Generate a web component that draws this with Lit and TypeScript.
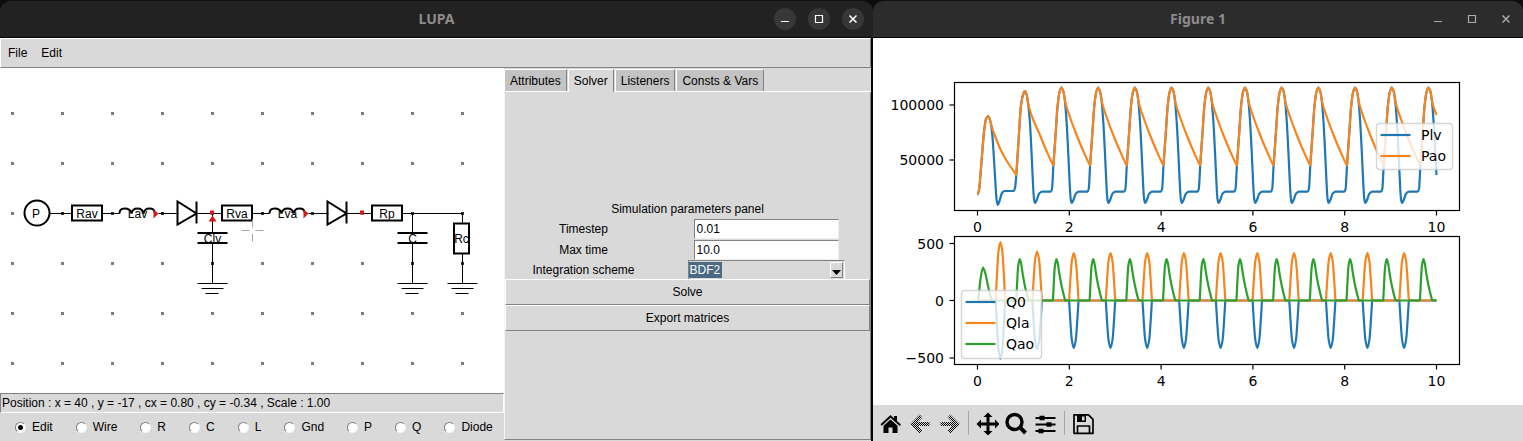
import { LitElement, html, svg, css } from "lit";
import { customElement, property, state } from "lit/decorators.js";
import { classMap } from "lit/directives/class-map.js";

type Pt = [number, number];

/* ---------- window title bar ---------- */

@customElement("title-bar")
class TitleBar extends LitElement {
  @property() heading = "";
  @property({ type: Boolean }) active = false;

  static styles = css`
    :host {
      display: block;
      background: #0c0c0c;
    }
    .bar {
      display: grid;
      grid-template-columns: 1fr auto 1fr;
      align-items: center;
      height: 38px;
      box-sizing: border-box;
      padding: 0 6px;
      border-top: 1px solid #101010;
      border-bottom: 1px solid #050505;
      border-radius: 11px 11px 0 0;
      background: #2c2c2c;
      color: #8c8c8c;
      font: bold 14px/18px "Noto Sans", "Open Sans", sans-serif;
    }
    .active {
      padding: 0 9px;
      background: #222;
    }
    .name {
      grid-column: 2;
      margin: 0;
      font: inherit;
    }
    .controls {
      display: flex;
      justify-content: flex-end;
      gap: 12px;
    }
    .control {
      display: block;
      width: 22px;
      height: 22px;
      padding: 0;
      border: 0;
      border-radius: 50%;
      background: none;
      color: #a9a9a9;
    }
    .active .control {
      background: #373737;
      color: #fff;
    }
    .glyph {
      display: block;
      fill: none;
      stroke: currentColor;
    }
  `;

  render() {
    return html`<header class=${classMap({ bar: true, active: this.active })}>
      <h1 class="name">${this.heading}</h1>
      <div class="controls">
        <button class="control" aria-label="Minimize">
          <svg class="glyph" width="22" height="22"><path d="M7 13.5h8" /></svg>
        </button>
        <button class="control" aria-label="Maximize">
          <svg class="glyph" width="22" height="22"><path d="M7.5 7.5h7v7h-7z" stroke-width="1.2" /></svg>
        </button>
        <button class="control" aria-label="Close">
          <svg class="glyph" width="22" height="22"><path d="M7.5 7.5l7 7M14.5 7.5l-7 7" stroke-width="1.5" /></svg>
        </button>
      </div>
    </header>`;
  }
}

/* ---------- circuit drawing ---------- */

const label = (x: number, y: number, text: string) =>
  svg`<text class="label" x=${x} y=${y} text-anchor="middle">${text}</text>`;

const resistor = (x: number, y: number, text: string) => svg`
  <rect class="thick" x=${x - 15} y=${y - 8} width="30" height="15"></rect>
  ${label(x, y + 4, text)}`;

const inductor = (x: number, y: number, text: string) => svg`
  <path class="thick" d="M${x - 18} ${y}q0 -5 5 -5q6 0 7 5q1 -5 6 -5t6 5q1 -5 6 -5t5 4"></path>
  <path class="flow" d="M${x + 16} ${y - 4}l5 4l-5 5z"></path>
  ${label(x, y + 4, text)}`;

const diode = (x: number, y: number) => svg`
  <path class="thick" d="M${x - 10} ${y - 12}v23l19 -11zM${x + 9} ${y - 12}v22"></path>`;

const capacitor = (x: number, y: number, text: string) => svg`
  <path class="thick" d="M${x - 15} ${y - 5.5}h30M${x - 15} ${y + 4.5}h30"></path>
  ${label(x, y + 4, text)}`;

const ground = (x: number, y: number) => svg`
  <path class="wire" d="M${x - 15} ${y}h30M${x - 11} ${y + 5}h22M${x - 7} ${y + 10}h13"></path>`;

const node = (x: number, y: number, kind: string) =>
  svg`<rect class=${kind} x=${x - 1.5} y=${y - 1.5} width="3" height="3"></rect>`;

@customElement("circuit-canvas")
class CircuitCanvas extends LitElement {
  static styles = css`
    :host {
      display: block;
      background: #fff;
      min-height: 0;
    }
    .sheet {
      display: block;
      width: 100%;
      height: 100%;
    }
    .grid { fill: #7d7d7d; }
    .joint { fill: #333; }
    .wire { fill: none; stroke: #000; stroke-width: 1; }
    .thick { fill: none; stroke: #000; stroke-width: 2; }
    .flow { fill: #d31818; }
    .cross { stroke: #a8a8a8; }
    .label { font: 12px "Liberation Sans", Arial, sans-serif; fill: #000; }
  `;

  render() {
    const dots: Pt[] = [];
    for (let r = 0; r < 6; r++) for (let c = 0; c < 10; c++) dots.push([c * 50, r * 50]);
    const joints: Pt[] = [[50, 100], [100, 100], [150, 100], [250, 100], [300, 100], [400, 100], [450, 100], [200, 150], [400, 150], [450, 150]];
    return html`<svg class="sheet" role="img" aria-label="Circuit">
      <g transform="translate(12.5 45.5)">
        ${dots.map(([x, y]) => node(x, y, "grid"))}
        ${joints.map(([x, y]) => node(x, y, "joint"))}
        <path class="wire" d="M37 100h22M90 100h17M146 100h20M184 100h25M240 100h17M296 100h20M334 100h25M390 100h60
          M200 100v19M200 130v40M400 100v19M400 130v40M450 100v9M450 140v30" />
        <circle class="thick" cx="24.5" cy="99.5" r="12.5" />
        ${label(23.5, 104, "P")}
        ${resistor(74.5, 100, "Rav")} ${inductor(125, 100, "Lav")} ${diode(175, 100)}
        ${resistor(224.5, 100, "Rva")} ${inductor(275, 100, "Lva")} ${diode(325, 100)}
        ${resistor(374.5, 100, "Rp")}
        ${capacitor(200, 125, "Clv")} ${capacitor(400, 125, "C")}
        <rect class="thick" x="441.5" y="110" width="15" height="30" />
        ${label(449, 129, "Rc")}
        ${ground(200, 170)} ${ground(400, 170)} ${ground(450, 170)}
        <path class="flow" d="M200 102l4 6h-8zM197.500 97h4v4h-4zM347.500 97h4v4h-4z" />
        <path class="cross" d="M229 117h8M243 117h8M240 106v8M240 120v8" />
      </g>
    </svg>`;
  }
}

/* ---------- editor window ---------- */

@customElement("editor-window")
class EditorWindow extends LitElement {
  @state() private tool = "Edit";
  @state() private tab = "Solver";

  static styles = css`
    :host {
      display: flex;
      flex-direction: column;
      box-sizing: border-box;
      background: #d9d9d9;
      color: #000;
      font: 12px/14px "Liberation Sans", Arial, sans-serif;
    }
    button, input, select {
      font: inherit;
      color: inherit;
      margin: 0;
      border-radius: 0;
      box-sizing: border-box;
    }
    .body {
      flex: 1;
      display: flex;
      flex-direction: column;
      min-height: 0;
      border-right: 2px solid #050505;
    }
    .menu {
      display: flex;
      gap: 12px;
      height: 30px;
      box-sizing: border-box;
      padding: 0 6px;
      border: 1px solid #fff;
      border-right-color: #828282;
      border-bottom-color: #828282;
    }
    .menu-item {
      padding: 0 1px;
      border: 0;
      background: none;
    }
    .main {
      flex: 1;
      min-height: 0;
      display: grid;
      grid-template-columns: 504fr 367fr;
    }
    .left {
      display: grid;
      grid-template-rows: 1fr auto auto;
      min-height: 0;
    }
    .status {
      padding: 2px 2px 2px 1px;
      border: 1px solid #828282;
      border-right-color: #fff;
      border-bottom-color: #fff;
    }
    .tools {
      display: flex;
      align-items: center;
      gap: 23px;
      height: 28px;
      margin: 0;
      padding: 0 0 0 15px;
      border: 0;
    }
    .tool {
      display: flex;
      align-items: center;
      gap: 6px;
    }
    .dot {
      appearance: none;
      width: 11px;
      height: 11px;
      border: 1px solid #828282;
      border-right-color: #f4f4f4;
      border-bottom-color: #f4f4f4;
      border-radius: 50%;
      background: #fff;
    }
    .dot:checked {
      background: radial-gradient(circle, #000 2px, #fff 3px);
    }
    .right {
      display: flex;
      flex-direction: column;
      padding-bottom: 1px;
    }
    .tabs {
      display: flex;
      gap: 1px;
      height: 24px;
      padding-top: 1px;
      box-sizing: border-box;
      border-bottom: 1px solid #fff;
    }
    .tab {
      padding: 0 5px;
      border: 1px solid #fff;
      border-right: 1px solid #828282;
      border-bottom: 0;
      border-radius: 2px 2px 0 0;
      background: #c3c3c3;
    }
    .chosen {
      background: #d9d9d9;
      margin-bottom: -1px;
    }
    .panel {
      flex: 1;
      display: flex;
      flex-direction: column;
      justify-content: center;
      border: 1px solid #828282;
      border-width: 0 1px 1px 0;
      border-left: 1px solid #f4f4f4;
    }
    .caption {
      margin: 0;
      font: inherit;
      line-height: 18px;
      text-align: center;
    }
    .form {
      display: grid;
      grid-template-columns: 157fr 208fr;
      grid-template-rows: 21px 21px 19px;
      place-items: center;
    }
    .field {
      width: 145px;
      height: 20px;
      padding: 0 2px;
      border: 1px solid #828282;
      border-right-color: #eee;
      border-bottom-color: #eee;
      background: #fff;
      outline: 0;
    }
    .combo {
      display: grid;
      grid-template-columns: 1fr 15px;
      width: 157px;
      height: 19px;
      box-sizing: border-box;
      border: 1px solid #828282;
      border-right-color: #fff;
      border-bottom: 0;
    }
    .choice {
      grid-area: 1 / 1 / 2 / 3;
      appearance: none;
      border: 0;
      padding: 0 0 0 1px;
      outline: 0;
      color: #fff;
      background: linear-gradient(#4a6984, #4a6984) 0 1px / 33px 16px no-repeat #d9d9d9;
    }
    .choice option {
      color: #000;
    }
    .drop {
      grid-area: 1 / 2;
      display: block;
      margin: 1px;
      border: 1px solid #fff;
      border-right-color: #828282;
      border-bottom-color: #828282;
      pointer-events: none;
      z-index: 1;
    }
    .push {
      height: 26px;
      padding: 0;
      border: 1px solid #fff;
      border-right-color: #828282;
      border-bottom-color: #828282;
      background: #d9d9d9;
    }
  `;

  render() {
    const tools = ["Edit", "Wire", "R", "C", "L", "Gnd", "P", "Q", "Diode"];
    const tabs = ["Attributes", "Solver", "Listeners", "Consts & Vars"];
    return html`
      <title-bar heading="LUPA" active></title-bar>
      <div class="body">
        <nav class="menu">
          <button class="menu-item">File</button>
          <button class="menu-item">Edit</button>
        </nav>
        <div class="main">
          <section class="left">
            <circuit-canvas></circuit-canvas>
            <div class="status">Position : x = 40 , y = -17 , cx = 0.80 , cy = -0.34 , Scale : 1.00</div>
            <fieldset class="tools" aria-label="Tool">
              ${tools.map((t) => html`<label class="tool">
                <input class="dot" type="radio" name="tool" .checked=${t === this.tool} @change=${() => (this.tool = t)} />${t}
              </label>`)}
            </fieldset>
          </section>
          <section class="right">
            <div class="tabs" role="tablist">
              ${tabs.map((t) => html`<button role="tab" aria-selected=${t === this.tab}
                class=${classMap({ tab: true, chosen: t === this.tab })}
                @click=${() => (this.tab = t)}>${t}</button>`)}
            </div>
            <div class="panel" role="tabpanel">
              <h2 class="caption">Simulation parameters panel</h2>
              <div class="form">
                <label for="step">Timestep</label>
                <input class="field" id="step" value="0.01" />
                <label for="max">Max time</label>
                <input class="field" id="max" value="10.0" />
                <label for="scheme">Integration scheme</label>
                <div class="combo">
                  <select class="choice" id="scheme"><option>BDF2</option></select>
                  <svg class="drop" viewBox="0 0 11 14"><path d="M1 7h9l-4.500 5z" /></svg>
                </div>
              </div>
              <button class="push">Solve</button>
              <button class="push">Export matrices</button>
            </div>
          </section>
        </div>
      </div>`;
  }
}

/* ---------- plots ---------- */

const PERIOD = 36.7;
const END = 563.5;

/* Monotone cubic through the samples, so that plateaus stay flat. */
function curve(pts: Pt[]): string {
  const n = pts.length;
  const slope = (i: number) => (pts[i + 1][1] - pts[i][1]) / (pts[i + 1][0] - pts[i][0]);
  const m = pts.map((_, i) => {
    if (i === 0) return 0;
    if (i === n - 1) return slope(i - 1);
    const a = slope(i - 1);
    const b = slope(i);
    return a * b <= 0 ? 0 : (2 * a * b) / (a + b);
  });
  let d = `M${pts[0][0]} ${pts[0][1]}`;
  for (let i = 0; i < n - 1; i++) {
    const [x0, y0] = pts[i];
    const [x1, y1] = pts[i + 1];
    const h = (x1 - x0) / 3;
    d += `C${(x0 + h).toFixed(2)} ${(y0 + h * m[i]).toFixed(2)} ${(x1 - h).toFixed(2)} ${(y1 - h * m[i + 1]).toFixed(2)} ${x1.toFixed(2)} ${y1.toFixed(2)}`;
  }
  return d;
}

/* A lead-in followed by periodic cycles, closed at the end of the simulated time. */
function repeat(start: Pt[], first: number, shape: (k: number) => Pt[], last: number): Pt[] {
  const out = [...start];
  for (let k = 0; k < 12; k++) for (const [x, y] of shape(k)) out.push([first + k * PERIOD + x, y]);
  return [...out.filter(([x]) => x < END - 0.5), [END, last]];
}

const rise = (k: number): Pt[] => {
  const top = k === 0 ? 53 : 49.5;
  return [[-5.5, 92], [-4, 70], [-2, top + 5], [0, top], [2, top + 4], [3.5, top + 13]];
};

const plv = repeat(
  [[104.5, 156.5], [106, 152], [108, 130], [111, 94], [113, 81], [115, 78], [117, 82], [118.5, 89], [120, 106], [122, 138],
    [123.5, 161], [124.7, 167], [126.5, 163], [129, 155], [131.5, 153], [140.5, 153], [142, 150], [143.5, 134]],
  151.7,
  (k) => [...rise(k), [5.2, 84], [7, 118], [8.3, 146], [9.3, 161], [10.3, 165], [12, 162], [14.5, 155.5], [17.5, 153.7],
    [26, 153.7], [27.3, 151], [28.7, 127.5]],
  137,
);

const pao = repeat(
  [[104.5, 156.5], [106, 152], [108, 130], [111, 94], [113, 81], [115, 78], [117, 82], [118.5, 88], [122, 98], [128, 112.5], [135, 125], [143, 136.6], [143.2, 137], [143.4, 135]],
  151.7,
  (k) => [...rise(k), [5, k ? 68.5 : 71.5], [9, k ? 80.5 : 83], [15, 96.5], [21, 111], [28.5, 127.2], [28.7, 127.5], [28.9, 125]],
  77,
);

const pulse = (h: number): Pt[] => [[-4.7, 262.5], [-4.5, 262.5 - h * 0.08], [-3.5, 262.5 - h * 0.42], [-2, 262.5 - h * 0.83], [0, 262.5 - h],
  [2, 262.5 - h * 0.83], [3.5, 262.5 - h * 0.42], [4.5, 262.5 - h * 0.08], [4.7, 262.5]];
const height = (k: number) => (k === 0 ? 58.5 : k === 1 ? 49 : 47.5);
const qla = repeat([[104.5, 262.5]], 127.4, (k) => pulse(height(k)), 262.5);
const q0 = repeat([[104.5, 262.5]], 127.4, (k) => pulse(-height(k)), 262.5);

const qao = repeat([[104.5, 262.5], [105.2, 261], [107.5, 241], [110, 229.5], [112.5, 236], [115, 248], [118.5, 261.5], [119, 262.5]], 146.7,
  () => [[-3.5, 262.5], [-3.3, 259], [-1.5, 228], [0, 221], [1.3, 225], [3, 236], [5, 247], [8.5, 261.5], [8.8, 262.5]], 262.5);

@customElement("figure-plots")
class FigurePlots extends LitElement {
  static styles = css`
    :host {
      display: block;
      min-height: 0;
      background: #fff;
    }
    .plots {
      display: block;
      width: 100%;
      height: 100%;
      font: 14px "DejaVu Sans", Verdana, sans-serif;
    }
    .frame { fill: none; stroke: #000; stroke-width: 1.2; }
    .line { fill: none; stroke-width: 2.2; stroke-linejoin: round; }
    .blue { stroke: #1f77b4; }
    .orange { stroke: #f5851f; }
    .green { stroke: #2ca02c; }
    .box { fill: #fff; fill-opacity: 0.8; stroke: #ccc; stroke-opacity: 0.8; stroke-width: 1.4; }
  `;

  private axes(top: number, ticks: [number, string][]) {
    const bottom = top + 128;
    return svg`
      <rect class="frame" x="81.5" y=${top} width="505" height="128"></rect>
      ${[0, 2, 4, 6, 8, 10].map((v) => svg`
        <path class="frame" d="M${104.5 + v * 45.9} ${bottom}v5"></path>
        <text x=${104.5 + v * 45.9} y=${bottom + 21} text-anchor="middle">${v}</text>`)}
      ${ticks.map(([y, t]) => svg`
        <path class="frame" d="M81.5 ${y}h-5"></path>
        <text x="71" y=${y + 5} text-anchor="end">${t}</text>`)}`;
  }

  private legend(x: number, y: number, w: number, rows: [string, string][]) {
    return svg`
      <rect class="box" x=${x} y=${y} width=${w} height=${rows.length * 22 + 2} rx="3"></rect>
      ${rows.map(([color, name], i) => svg`
        <path class="line ${color}" d="M${x + 4} ${y + 11.5 + i * 21}h30"></path>
        <text x=${x + 44.5} y=${y + 16.5 + i * 21}>${name}</text>`)}`;
  }

  render() {
    return html`<svg class="plots" viewBox="0 0 650 367" role="img" aria-label="Pressure and flow plots">
      <path class="line blue" d=${curve(plv)} />
      <path class="line orange" d=${curve(pao)} />
      <path class="line blue" d=${curve(q0)} />
      <path class="line orange" d=${curve(qla)} />
      <path class="line green" d=${curve(qao)} />
      ${this.axes(44.5, [[67, "100000"], [122, "50000"]])}
      ${this.axes(198.5, [[205.5, "500"], [262.5, "0"], [320, "−500"]])}
      ${this.legend(503.5, 85.5, 76, [["blue", "Plv"], ["orange", "Pao"]])}
      ${this.legend(88.5, 252.5, 80, [["blue", "Q0"], ["orange", "Qla"], ["green", "Qao"]])}
    </svg>`;
  }
}

@customElement("figure-window")
class FigureWindow extends LitElement {
  static styles = css`
    :host {
      display: grid;
      grid-template-rows: auto 1fr auto;
      min-height: 0;
    }
    .toolbar {
      display: flex;
      align-items: center;
      height: 36px;
      padding-left: 4px;
      background: #d9d9d9;
    }
    .action {
      display: grid;
      place-items: center;
      width: 29px;
      height: 29px;
      padding: 0;
      border: 0;
      background: none;
    }
    .divider {
      width: 1px;
      height: 24px;
      margin: 0 4px;
      background: #a6a6a6;
    }
    .icon {
      display: block;
      fill: #000;
      stroke: none;
    }
    .stroke {
      fill: none;
      stroke: #000;
    }
    .faded {
      fill: none;
      stroke: url(#stipple);
      stroke-width: 4;
    }
  `;

  render() {
    const icon = (name: string, body: unknown) =>
      html`<button class="action" aria-label=${name}><svg class="icon" width="23" height="23" viewBox="0 0 23 23">${body}</svg></button>`;
    const stipple = svg`<defs><pattern id="stipple" width="2" height="2" patternUnits="userSpaceOnUse">
      <path fill="#000" d="M0 0h1v1h-1zM1 1h1v1h-1z"></path></pattern></defs>`;
    return html`
      <title-bar heading="Figure 1"></title-bar>
      <figure-plots></figure-plots>
      <div class="toolbar" role="toolbar">
        ${icon("Home", svg`<path d="M0.500 12.200L10.500 3l3.500 3.200V4h3v5l4 3.500l-1.300 1.500l-9.200 -8.300L1.800 13.700z"></path>
          <path d="M10.500 7.500l7 6.300v7.200h-5v-5.500h-4v5.500h-5v-7.200z"></path>`)}
        ${icon("Back", svg`${stipple}<path class="faded" d="M12 4l-8 8l8 8M4 12h16.500"></path>`)}
        ${icon("Forward", svg`${stipple}<path class="faded" d="M11 4l8 8l-8 8M19 12h-16.500"></path>`)}
        <span class="divider"></span>
        ${icon("Pan", svg`<path d="M12 0.500l4.500 4.500h-3v5.500h5.500v-3l4.500 4.500l-4.500 4.500v-3h-5.500v5.500h3l-4.500 4.500l-4.500 -4.500h3v-5.500h-5.500v3l-4.500 -4.500l4.500 -4.500v3h5.500v-5.500h-3z"></path>`)}
        ${icon("Zoom", svg`<circle class="stroke" cx="9.500" cy="10" r="7.500" stroke-width="3.400"></circle>
          <path class="stroke" d="M14.800 15.200l5.700 5.800" stroke-width="4"></path>`)}
        ${icon("Configure subplots", svg`<path d="M1.500 5h20v2h-20zM1.500 11.500h20v2h-20zM1.500 18h20v2h-20zM5.500 3.700h5v4.600h-5zM12.500 10.200h5v4.600h-5zM4.500 16.700h5v4.600h-5z"></path>`)}
        <span class="divider"></span>
        ${icon("Save", svg`<path class="stroke" stroke-width="1.700" stroke-linejoin="round" d="M2 2.800h14.500l4.500 4.500v14h-19zM5.500 21v-7h12v7"></path>
          <path fill-rule="evenodd" d="M5 3h9v7h-9zM10 4.500v4h2.500v-4z"></path>`)}
      </div>`;
  }
}

@customElement("app-root")
class AppRoot extends LitElement {
  static styles = css`
    :host {
      display: grid;
      grid-template-columns: 873fr 650fr;
      min-height: 100vh;
      background: #fff;
    }
  `;

  render() {
    return html`<editor-window></editor-window><figure-window></figure-window>`;
  }
}
